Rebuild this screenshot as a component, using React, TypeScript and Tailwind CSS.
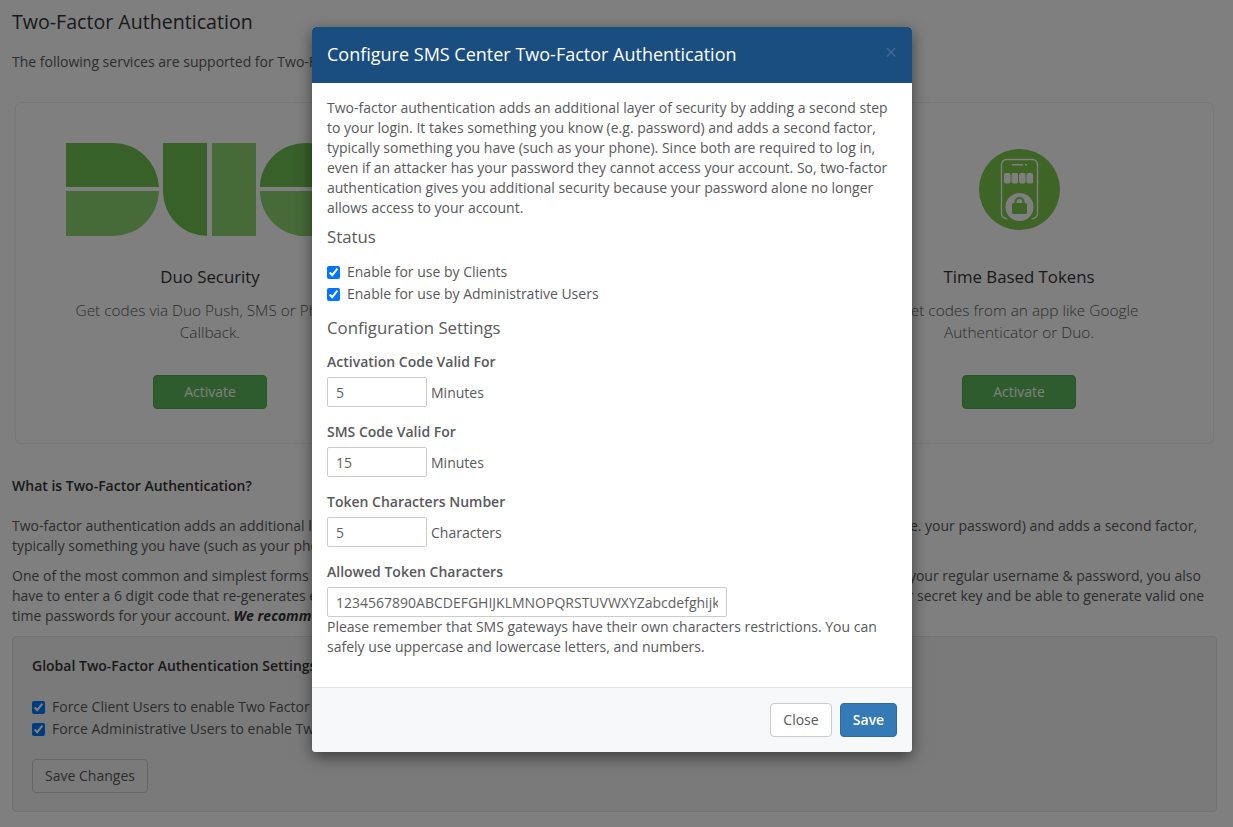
const font = { fontFamily: '"Open Sans", sans-serif' };

function Check({ label }: { label: string }) {
  return (
    <label className="flex h-[22px] items-center">
      <input type="checkbox" defaultChecked className="m-0 h-[13px] w-[13px]" />
      <span className="ml-[7px]">{label}</span>
    </label>
  );
}

function ServiceColumn({
  icon,
  title,
  lines,
}: {
  icon: React.ReactNode;
  title: string;
  lines: string[];
}) {
  return (
    <div className="flex w-[388px] flex-col items-center pt-[40px] text-center">
      <div className="flex h-[93px] items-center justify-center">{icon}</div>
      <h3 className="mt-[30px] text-[16.8px] leading-[22px] text-[#333]">{title}</h3>
      <p className="mt-[12px] text-[15.4px] leading-[22px] font-light">
        {lines[0]}
        <br />
        {lines[1]}
      </p>
      <button className="mt-[31px] h-[34px] w-[114px] rounded-[4px] border border-[#4cae4c] bg-[#5cb85c] text-[14px] text-white">
        Activate
      </button>
    </div>
  );
}

function DuoLogo() {
  return (
    <svg width="288" height="93" viewBox="0 0 288 93" className="shrink-0">
      <path d="M0 0H47A46 46 0 0 1 93 44H0Z" fill="#70c052" />
      <path d="M0 48H93A46 46 0 0 1 47 93H0Z" fill="#8cd470" />
      <path d="M97 0H141V93A44 45 0 0 1 97 48Z" fill="#70c052" />
      <rect x="146" y="0" width="44" height="93" fill="#8cd470" />
      <path d="M194 44A46 44 0 0 1 240 0H241A46 44 0 0 1 287 44Z" fill="#70c052" />
      <path d="M194 48H287A46 45 0 0 1 194 48Z" fill="#8cd470" />
    </svg>
  );
}

function TokenIcon() {
  return (
    <svg width="81" height="81" viewBox="0 0 81 81">
      <circle cx="40.5" cy="40.5" r="40.5" fill="#7cc84c" />
      <rect x="22.5" y="10.500" width="36" height="59" rx="5" fill="none" stroke="#fff" strokeWidth="1.4" />
      <rect x="33" y="15" width="11" height="1.5" fill="#fff" />
      <rect x="46" y="15" width="2" height="1.5" fill="#fff" />
      <rect x="25" y="24" width="6.600" height="10.500" rx="2" fill="#fff" />
      <rect x="32.500" y="24" width="6.600" height="10.500" rx="2" fill="#fff" />
      <rect x="40" y="24" width="6.600" height="10.500" rx="2" fill="#fff" />
      <rect x="47.500" y="24" width="6.600" height="10.500" rx="2" fill="#fff" />
      <circle cx="40.5" cy="58" r="17" fill="#7cc84c" />
      <circle cx="40.5" cy="58" r="14" fill="#fff" />
      <path d="M36.500 54v-1a4 4 0 0 1 8 0v1" fill="none" stroke="#7cc84c" strokeWidth="2" />
      <rect x="33" y="54" width="15" height="11" rx="1.500" fill="#7cc84c" />
    </svg>
  );
}

function NumberField({ label, value, unit }: { label: string; value: string; unit: string }) {
  return (
    <div className="mb-[15px]">
      <div className="mb-[5px] leading-[20px] font-semibold">{label}</div>
      <div className="flex items-center">
        <input
          readOnly
          value={value}
          className="h-[30px] w-[100px] rounded-[2px] border border-[#ccc] px-[8px] text-[14px] text-[#5f5f5f] outline-none"
        />
        <span className="ml-[4px] pt-[2px]">{unit}</span>
      </div>
    </div>
  );
}

export default function App() {
  return (
    <div className="relative h-[827px] overflow-hidden bg-white text-[14px] leading-[20px] text-[#58595b]" style={font}>
      <div className="pr-4 pl-3">
        <h1 className="pt-[7px] text-[19.6px] leading-[30px] text-[#333]">Two-Factor Authentication</h1>
        <p className="mt-[15px]">The following services are supported for Two-Factor Authentication.</p>

        <div className="mx-[3px] mt-[30px] flex h-[342px] justify-between rounded-[6px] border border-[#eee]">
          <ServiceColumn
            icon={<DuoLogo />}
            title="Duo Security"
            lines={["Get codes via Duo Push, SMS or Phone", "Callback."]}
          />
          <ServiceColumn
            icon={<TokenIcon />}
            title="SMS Center"
            lines={["Get codes via SMS sent to your", "mobile phone."]}
          />
          <ServiceColumn
            icon={<TokenIcon />}
            title="Time Based Tokens"
            lines={["Get codes from an app like Google", "Authenticator or Duo."]}
          />
        </div>

        <p className="mt-[32px] font-semibold text-[#333]">What is Two-Factor Authentication?</p>
        <p className="mt-[20px] whitespace-nowrap">
          Two-factor authentication adds an additional layer of security by adding a second step to your login portal. It takes something you know (i.e. your password) and adds a second factor,
          <br />
          typically something you have (such as your phone).
        </p>
        <p className="mt-[10px] whitespace-nowrap">
          One of the most common and simplest forms of Two-Factor Authentication is Time Based Tokens. With Time Based Tokens, in addition to your regular username &amp; password, you also
          <br />
          have to enter a 6 digit code that re-generates every 30 seconds. Only your token device (typically, a smartphone or a device) will know your secret key and be able to generate valid one
          <br />
          time passwords for your account. <b className="italic text-[#333]">We recommend enabling Two-Factor Authentication.</b>
        </p>

        <div className="mt-[10px] h-[176px] rounded-[4px] border border-[#e3e3e3] bg-[#f5f5f5] px-[19px] pt-[19px]">
          <p className="font-semibold text-[#333]">Global Two-Factor Authentication Settings</p>
          <div className="mt-[20px]">
            <Check label="Force Client Users to enable Two Factor Authentication" />
            <Check label="Force Administrative Users to enable Two Factor Authentication" />
          </div>
          <button className="mt-[19px] h-[34px] w-[116px] rounded-[4px] border border-[#ccc] text-[14px]">
            Save Changes
          </button>
        </div>
      </div>

      <div className="absolute inset-0 bg-black/50" />

      <div className="absolute top-[27px] left-[312px] w-[600px] rounded-[4px] bg-white shadow-[0_5px_15px_rgba(0,0,0,0.5)]">
        <div className="flex h-[56px] items-center justify-between rounded-t-[4px] bg-[#1a4d80] px-[15px]">
          <h2 className="mb-[2px] text-[18px] font-medium text-white">Configure SMS Center Two-Factor Authentication</h2>
          <span className="mb-[6px] text-[21px] font-normal text-white opacity-15">×</span>
        </div>

        <div className="p-[15px]">
          <p>
            Two-factor authentication adds an additional layer of security by adding a second step to your login. It takes something you know (e.g. password) and adds a second factor, typically something you have (such as your phone). Since both are required to log in, even if an attacker has your password they cannot access your account. So, two-factor authentication gives you additional security because your password alone no longer allows access to your account.
          </p>
          <h4 className="mt-[8px] text-[16.8px] leading-[22px]">Status</h4>
          <div className="mt-[13px]">
            <Check label="Enable for use by Clients" />
            <Check label="Enable for use by Administrative Users" />
          </div>
          <h4 className="mt-[12px] mb-[13px] text-[16.8px] leading-[22px]">Configuration Settings</h4>

          <NumberField label="Activation Code Valid For" value="5" unit="Minutes" />
          <NumberField label="SMS Code Valid For" value="15" unit="Minutes" />
          <NumberField label="Token Characters Number" value="5" unit="Characters" />

          <div className="mb-[15px]">
            <div className="mb-[5px] leading-[20px] font-semibold">Allowed Token Characters</div>
            <input
              readOnly
              value="1234567890ABCDEFGHIJKLMNOPQRSTUVWXYZabcdefghijklmnopqrstuvwxyz"
              className="block h-[30px] w-[400px] rounded-[2px] border border-[#ccc] px-[8px] text-[14px] text-[#5f5f5f] outline-none"
            />
            <p>
              Please remember that SMS gateways have their own characters restrictions. You can safely use uppercase and lowercase letters, and numbers.
            </p>
          </div>
        </div>

        <div className="flex h-[65px] items-center justify-end gap-[8px] rounded-b-[4px] border-t border-[#e5e5e5] bg-[#f7f8fa] px-[15px]">
          <button className="h-[34px] w-[62px] rounded-[4px] border border-[#ccc] bg-white text-[14px] text-[#58595b]">Close</button>
          <button className="h-[34px] w-[57px] rounded-[4px] border border-[#2e6da4] bg-[#337ab7] text-[14px] font-semibold text-white">Save</button>
        </div>
      </div>
    </div>
  );
}
